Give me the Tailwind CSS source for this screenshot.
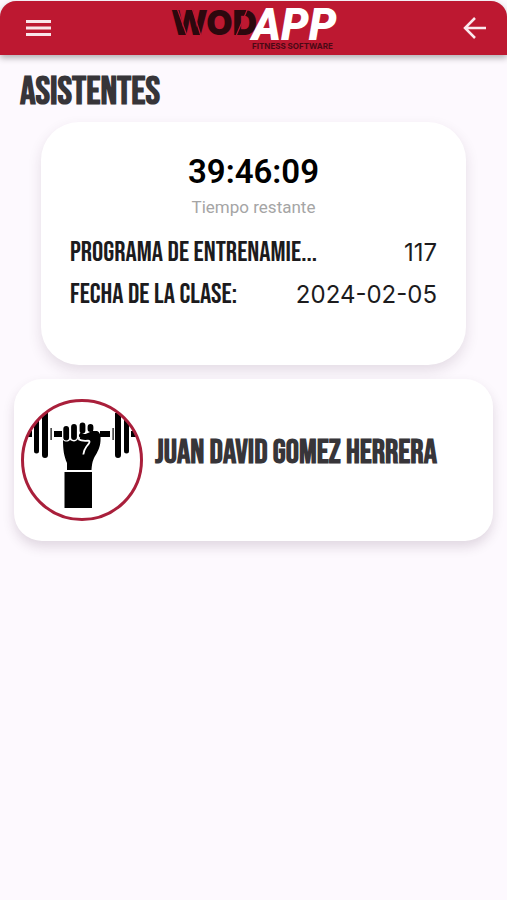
<!DOCTYPE html>
<html lang="es">
<head>
<meta charset="utf-8">
<meta name="viewport" content="width=device-width, initial-scale=1">
<title>WodApp - Asistentes</title>
<script src="https://cdn.jsdelivr.net/npm/@tailwindcss/browser@4"></script>
</head>
<body class="min-h-screen bg-[#fdf9fe] font-['Roboto',sans-serif] text-[#1c1b1d]">
<header class="mt-px flex h-[54px] items-center justify-between rounded-t-2xl bg-[#bd1831] px-5 shadow-[0_3px_6px_rgba(0,0,0,0.3)]">
  <button type="button" aria-label="Menú" class="flex size-9 items-center justify-center">
    <svg class="h-5 w-[26px]" viewBox="0 0 26 20" fill="#f9e4e9"><path d="M1 2h25v3H1zM1 8.500h25v3H1zM1 15h25v3H1z"/></svg>
  </button>
  <svg class="h-[54px] w-[176px] overflow-visible" viewBox="0 0 176 54" role="img" aria-label="WODAPP Fitness Software">
    <text x="5" y="34" font-family="Inter, sans-serif" font-weight="900" font-size="34" fill="#2c080e">WOD</text>
    <path d="M11 7l10 28M26 7l9 28M70 35L82 7" stroke="#bd1831" stroke-width="1.200"/>
    <text x="86" y="39" font-family="Roboto, sans-serif" font-weight="900" font-style="italic" font-size="44" fill="#fff">APP</text>
    <text x="86" y="48" font-family="Inter, sans-serif" font-weight="700" font-size="8" fill="#4a0915">FITNESS SOFTWARE</text>
  </svg>
  <button type="button" aria-label="Volver" class="flex size-9 items-center justify-center">
    <svg class="size-6 overflow-visible" viewBox="0 0 24 24" fill="none" stroke="#fbe9ee" stroke-width="2.500"><path d="M29 12H9M18 2L8 12l10 10"/></svg>
  </button>
</header>
<main class="px-[14px] pb-8 font-['Bebas_Neue',sans-serif]">
  <h1 class="px-[6px] pt-[18px] text-[39px] leading-10 font-bold text-[#373539]">ASISTENTES</h1>
  <section class="mx-[27px] mt-[9px] h-[243px] rounded-[38px] bg-white px-[29px] pt-7 shadow-[0_6px_14px_rgba(60,30,60,0.13)]">
    <p class="text-center font-['Roboto',sans-serif] text-[33px] leading-11 font-semibold text-black">39:46:09</p>
    <p class="text-center font-['Roboto',sans-serif] text-[17px] leading-[26px] text-[#a5a5a5]">Tiempo restante</p>
    <dl class="mt-3 text-[28px] leading-[42px]">
      <div class="flex justify-between gap-4"><dt class="whitespace-nowrap">PROGRAMA DE ENTRENAMIE...</dt><dd class="font-['Inter',sans-serif] text-2xl leading-[42px]">117</dd></div>
      <div class="flex justify-between gap-4"><dt class="whitespace-nowrap">FECHA DE LA CLASE:</dt><dd class="font-['Inter',sans-serif] text-2xl leading-[42px]">2024-02-05</dd></div>
    </dl>
  </section>
  <article class="mt-[14px] flex h-[162px] items-center gap-3 rounded-[28px] bg-white px-[7px] shadow-[0_6px_12px_rgba(60,30,60,0.15)]">
    <svg class="size-[122px] shrink-0" viewBox="0 0 122 122" role="img" aria-label="Foto de Juan David Gomez Herrera">
      <defs><clipPath id="c"><circle cx="61" cy="61" r="59"/></clipPath></defs>
      <circle cx="61" cy="61" r="59" fill="#fff"/>
      <g clip-path="url(#c)">
        <path d="M13 14h5v38a2.500 2.500 0 0 1-5 0zM21 14h6v42a3 3 0 0 1-6 0zM94 14h6v42a3 3 0 0 1-6 0zM103 14h5v38a2.500 2.500 0 0 1-5 0zM4 32h7v6H4zM110 32h8v6h-8zM29.500 29h1.200v12h-1.200zM33 32h8v6h-8zM79 32h10v6H79zM91.500 29h1.200v12h-1.200z"/>
        <path d="M42 41c2 2 5 2 7 0 3 2 6 2 8-1l4-3 10-5h5c3 1 4 5 3.500 10-.5 7-3 11-6 16-2 4-2.500 7-3 13H46v-7c-3-7-4-13-4-23z"/>
        <path d="M45.200 30v8.500M53 28v10M61.500 26.500v5M69.500 28v2" stroke="#000" stroke-width="5.800" stroke-linecap="round"/>
        <path d="M58 35v5.500c2 1.500 5 1.500 9 1.200 3 .2 1 3-1.500 5.800-2 2.500-2.800 5-3.200 8" fill="none" stroke="#fff" stroke-width="1.800"/>
        <path d="M60.500 36.500c4 2.500 8-.5 14-.5" fill="none" stroke="#000" stroke-width="5" stroke-linecap="round"/>
        <path d="M43.500 73h27.500v36H43.500z"/>
      </g>
      <circle cx="61" cy="61" r="59.500" fill="none" stroke="#a91f3b" stroke-width="3"/>
    </svg>
    <h2 class="pb-[14px] text-[33px] leading-9 font-bold whitespace-nowrap text-[#373539]">JUAN DAVID GOMEZ HERRERA</h2>
  </article>
</main>
</body>
</html>
